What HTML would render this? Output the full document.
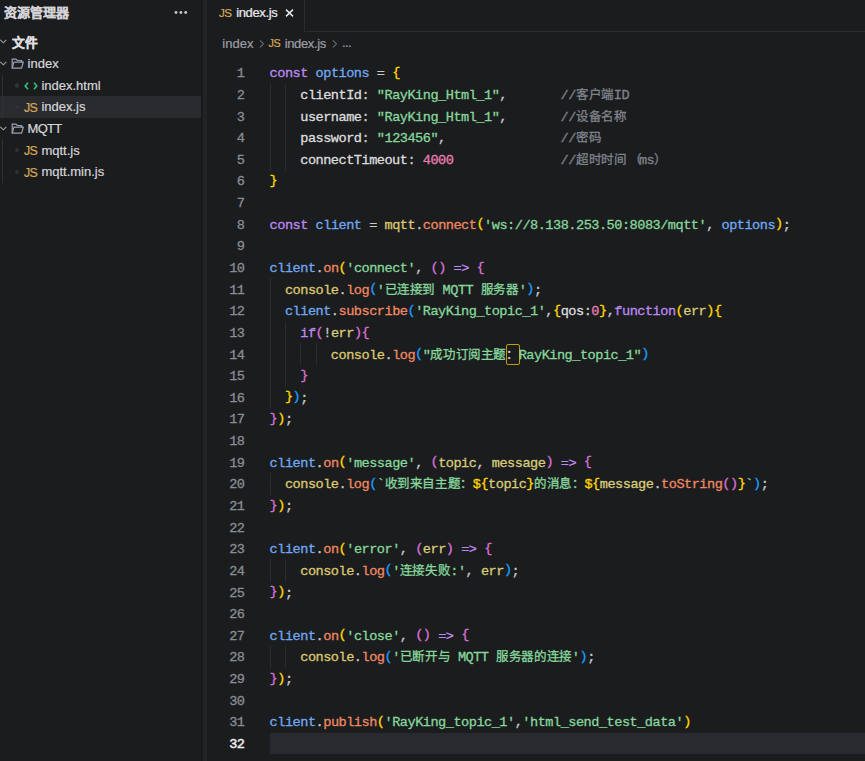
<!DOCTYPE html>
<html lang="zh-CN"><head><meta charset="utf-8"><title>index.js</title>
<style>
*{margin:0;padding:0;box-sizing:border-box}
html,body{width:865px;height:761px;overflow:hidden;background:#1b1c1e}
body{position:relative;font-family:"Liberation Sans",sans-serif;color:#d4d4d4}
.abs{position:absolute}
#side div,#tabs div{-webkit-text-stroke:0.2px currentColor}
#side{position:absolute;left:0;top:0;width:201px;height:761px;background:#1b1c1e}
#sash{position:absolute;left:203px;top:0;width:4px;height:761px;background:#222327}
.row{position:absolute;left:0;width:201px;height:21.8px;line-height:21.8px;font-size:13px;color:#d0d0d4;white-space:nowrap}
.sel{background:#2a2b2f}
.ln{position:absolute;left:207px;width:37.5px;text-align:right;height:21.635px;line-height:21.635px;font-family:"Liberation Mono",monospace;font-size:13.6px;letter-spacing:-0.501px;color:#8a8d93}
.ln.cur{color:#f0f0f2;-webkit-text-stroke:0.45px currentColor}
.cl{position:absolute;left:269.6px;height:21.635px;line-height:21.635px;font-family:"Liberation Mono",monospace;font-size:13.6px;letter-spacing:-0.501px;white-space:pre}
.cl span{white-space:pre}
.lp{font-style:normal;position:relative;left:3px}
.br{font-weight:normal;position:relative;top:-1.4px}
.cl,.ln{-webkit-text-stroke:0.3px currentColor}
i.cj{font-style:normal;font-size:12.5px;letter-spacing:-0.4px}
.gd{position:absolute;width:1px;height:22.135px;background:#2b2c30}
.box{}
#ubox{position:absolute;left:506.2px;top:343.5px;width:13.8px;height:21.1px;border:1.5px solid #c29b00;border-radius:2px}
#curline{position:absolute;left:269.7px;top:732.8px;width:596px;height:21px;background:#282a30}
</style></head>
<body>

<div id="side">
  <div class="abs" style="left:4px;top:4px;font-size:13px;font-weight:bold;color:#d4d4d8;line-height:17px">资源管理器</div>
  <svg class="abs" style="left:170px;top:8px" width="20" height="9" viewBox="0 0 20 9"><circle cx="6" cy="4.5" r="1.45" fill="#c4c4cc"/><circle cx="10.9" cy="4.5" r="1.45" fill="#c4c4cc"/><circle cx="15.7" cy="4.5" r="1.45" fill="#c4c4cc"/></svg>
  <div class="abs sel" style="left:0;top:96px;width:201px;height:21.8px"></div><div class="abs" style="left:11.8px;top:35.00px;font-size:12.8px;font-weight:bold;color:#e0e0e4;line-height:16px">文件</div><svg class="abs" style="left:0;top:39.40px" width="8" height="6" viewBox="0 0 8 6"><path d="M0.3 0.8 L3.3 3.8 L6.3 0.8" fill="none" stroke="#a0a3aa" stroke-width="1.1"/></svg><svg class="abs" style="left:0;top:60.83px" width="8" height="6" viewBox="0 0 8 6"><path d="M0.3 0.8 L3.3 3.8 L6.3 0.8" fill="none" stroke="#a0a3aa" stroke-width="1.1"/></svg><svg class="abs" style="left:10.5px;top:57.83px" width="14" height="12" viewBox="0 0 14 12"><path d="M1.2 10.2 V1.1 H5 L6.3 2.5 H10.6 V4.2" fill="none" stroke="#9ba1b0" stroke-width="1.2"/><path d="M1.2 10.2 L2.9 4.2 H12.3 L10.6 10.2 Z" fill="none" stroke="#9ba1b0" stroke-width="1.2" stroke-linejoin="round"/></svg><div class="abs" style="left:27.6px;top:56.03px;font-size:13px;color:#d6d6da;line-height:16px;letter-spacing:0px">index</div><svg class="abs" style="left:0;top:125.72px" width="8" height="6" viewBox="0 0 8 6"><path d="M0.3 0.8 L3.3 3.8 L6.3 0.8" fill="none" stroke="#a0a3aa" stroke-width="1.1"/></svg><svg class="abs" style="left:10.5px;top:122.72px" width="14" height="12" viewBox="0 0 14 12"><path d="M1.2 10.2 V1.1 H5 L6.3 2.5 H10.6 V4.2" fill="none" stroke="#9ba1b0" stroke-width="1.2"/><path d="M1.2 10.2 L2.9 4.2 H12.3 L10.6 10.2 Z" fill="none" stroke="#9ba1b0" stroke-width="1.2" stroke-linejoin="round"/></svg><div class="abs" style="left:27.6px;top:120.92px;font-size:13px;color:#d6d6da;line-height:16px;letter-spacing:-0.75px">MQTT</div><div class="abs" style="left:2.2px;top:75px;width:1px;height:43px;background:#303136"></div><div class="abs" style="left:2.2px;top:139px;width:1px;height:44px;background:#303136"></div><div class="abs" style="left:14.6px;top:83.36px;width:4.2px;height:4.2px;border-radius:50%;background:#303236"></div><svg class="abs" style="left:24px;top:81.06px" width="14" height="10" viewBox="0 0 14 10"><path d="M4 1.7 L1.2 5 L4 8.3 M10 1.7 L12.8 5 L10 8.3" fill="none" stroke="#2fc47e" stroke-width="1.6"/></svg><div class="abs" style="left:41.4px;top:77.66px;font-size:13px;color:#d6d6da;line-height:16px">index.html</div><div class="abs" style="left:14.6px;top:104.99px;width:4.2px;height:4.2px;border-radius:50%;background:#303236"></div><div class="abs" style="left:24px;top:100.69px;font-size:12.4px;line-height:14px;color:#d6a957;letter-spacing:-0.6px">JS</div><div class="abs" style="left:41.4px;top:99.29px;font-size:13px;color:#d6d6da;line-height:16px">index.js</div><div class="abs" style="left:14.6px;top:148.25px;width:4.2px;height:4.2px;border-radius:50%;background:#303236"></div><div class="abs" style="left:24px;top:143.95px;font-size:12.4px;line-height:14px;color:#d6a957;letter-spacing:-0.6px">JS</div><div class="abs" style="left:41.4px;top:142.55px;font-size:13px;color:#d6d6da;line-height:16px">mqtt.js</div><div class="abs" style="left:14.6px;top:169.88px;width:4.2px;height:4.2px;border-radius:50%;background:#303236"></div><div class="abs" style="left:24px;top:165.58px;font-size:12.4px;line-height:14px;color:#d6a957;letter-spacing:-0.6px">JS</div><div class="abs" style="left:41.4px;top:164.18px;font-size:13px;color:#d6d6da;line-height:16px">mqtt.min.js</div>
</div>
<div id="sash"></div>
<div class="abs" style="left:201px;top:0;width:2px;height:761px;background:#19191b"></div>

<div id="tabs">
<div class="abs" style="left:304px;top:31px;width:561px;height:1px;background:#2a2c30"></div>
<div class="abs" style="left:304px;top:0;width:1px;height:32px;background:#2a2c30"></div>
<div class="abs" style="left:219px;top:6px;font-size:11.6px;line-height:14px;color:#d6a957;letter-spacing:-0.6px">JS</div>
<div class="abs" style="left:236.2px;top:5px;font-size:13px;line-height:16px;color:#ececee;letter-spacing:-0.35px">index.js</div>
<svg class="abs" style="left:285px;top:9px" width="9" height="8" viewBox="0 0 9 8"><path d="M1 0.6 L8 7.4 M8 0.6 L1 7.4" stroke="#e6e6e8" stroke-width="1.5"/></svg>
<div class="abs" style="left:222.3px;top:35.5px;font-size:13px;line-height:16px;color:#9c9ea5">index</div>
<svg class="abs" style="left:258.5px;top:38.5px" width="6" height="10" viewBox="0 0 6 10"><path d="M0.8 1.3 L4.6 4.9 L0.8 8.5" fill="none" stroke="#8c8f96" stroke-width="1"/></svg>
<div class="abs" style="left:268.6px;top:36px;font-size:10.8px;line-height:14px;color:#d6a957;letter-spacing:-0.6px">JS</div>
<div class="abs" style="left:284.7px;top:35.5px;font-size:13px;line-height:16px;color:#9c9ea5;letter-spacing:-0.35px">index.js</div>
<svg class="abs" style="left:331.5px;top:38.5px" width="6" height="10" viewBox="0 0 6 10"><path d="M0.8 1.3 L4.6 4.9 L0.8 8.5" fill="none" stroke="#8c8f96" stroke-width="1"/></svg>
<div class="abs" style="left:342px;top:35px;font-size:13px;line-height:16px;color:#9c9ea5;letter-spacing:-0.6px">...</div>
</div>
<div id="curline"></div>
<div id="ubox"></div>
<div class="ln" style="top:63.28px">1</div>
<div class="cl" style="top:63.28px"><span style="color:#bd8af2">const</span><span style="color:#c9c9c9"> </span><span style="color:#6fa8f0">options</span><span style="color:#c9c9c9"> = </span><span style="color:#ffd700"><b class="br">{</b></span></div>
<div class="ln" style="top:84.92px">2</div>
<div class="gd" style="top:83.52px;left:269.60px"></div>
<div class="gd" style="top:83.52px;left:284.92px"></div>
<div class="cl" style="top:84.92px"><span style="color:#dedede">    clientId</span><span style="color:#c9c9c9">: </span><span style="color:#86d79c">&quot;RayKing_Html_1&quot;</span><span style="color:#c9c9c9">,       </span><span style="color:#7f838a">//<i class="cj">客户端</i>ID</span></div>
<div class="ln" style="top:106.55px">3</div>
<div class="gd" style="top:105.15px;left:269.60px"></div>
<div class="gd" style="top:105.15px;left:284.92px"></div>
<div class="cl" style="top:106.55px"><span style="color:#dedede">    username</span><span style="color:#c9c9c9">: </span><span style="color:#86d79c">&quot;RayKing_Html_1&quot;</span><span style="color:#c9c9c9">,       </span><span style="color:#7f838a">//<i class="cj">设备名称</i></span></div>
<div class="ln" style="top:128.19px">4</div>
<div class="gd" style="top:126.79px;left:269.60px"></div>
<div class="gd" style="top:126.79px;left:284.92px"></div>
<div class="cl" style="top:128.19px"><span style="color:#dedede">    password</span><span style="color:#c9c9c9">: </span><span style="color:#86d79c">&quot;123456&quot;</span><span style="color:#c9c9c9">,               </span><span style="color:#7f838a">//<i class="cj">密码</i></span></div>
<div class="ln" style="top:149.82px">5</div>
<div class="gd" style="top:148.42px;left:269.60px"></div>
<div class="gd" style="top:148.42px;left:284.92px"></div>
<div class="cl" style="top:149.82px"><span style="color:#dedede">    connectTimeout</span><span style="color:#c9c9c9">: </span><span style="color:#e97fb2">4000</span><span style="color:#c9c9c9">              </span><span style="color:#7f838a">//<i class="cj">超时时间<i class="lp">（</i></i>ms<i class="cj">）</i></span></div>
<div class="ln" style="top:171.46px">6</div>
<div class="cl" style="top:171.46px"><span style="color:#ffd700"><b class="br">}</b></span></div>
<div class="ln" style="top:193.09px">7</div>
<div class="ln" style="top:214.73px">8</div>
<div class="cl" style="top:214.73px"><span style="color:#bd8af2">const</span><span style="color:#c9c9c9"> </span><span style="color:#6fa8f0">client</span><span style="color:#c9c9c9"> = </span><span style="color:#dcc870">mqtt</span><span style="color:#c9c9c9">.</span><span style="color:#ee8862">connect</span><span style="color:#ffd700"><b class="br">(</b></span><span style="color:#86d79c">&#x27;ws://8.138.253.50:8083/mqtt&#x27;</span><span style="color:#c9c9c9">, </span><span style="color:#6fa8f0">options</span><span style="color:#ffd700"><b class="br">)</b></span><span style="color:#c9c9c9">;</span></div>
<div class="ln" style="top:236.36px">9</div>
<div class="ln" style="top:258.00px">10</div>
<div class="cl" style="top:258.00px"><span style="color:#6fa8f0">client</span><span style="color:#c9c9c9">.</span><span style="color:#ee8862">on</span><span style="color:#ffd700"><b class="br">(</b></span><span style="color:#86d79c">&#x27;connect&#x27;</span><span style="color:#c9c9c9">, </span><span style="color:#da70d6"><b class="br">(</b><b class="br">)</b></span><span style="color:#c9c9c9"> </span><span style="color:#bd8af2">=&gt;</span><span style="color:#c9c9c9"> </span><span style="color:#da70d6"><b class="br">{</b></span></div>
<div class="ln" style="top:279.63px">11</div>
<div class="gd" style="top:278.23px;left:269.60px"></div>
<div class="cl" style="top:279.63px"><span style="color:#dcc870">  console</span><span style="color:#c9c9c9">.</span><span style="color:#ee8862">log</span><span style="color:#179fff"><b class="br">(</b></span><span style="color:#86d79c">&#x27;<i class="cj">已连接到</i> MQTT <i class="cj">服务器</i>&#x27;</span><span style="color:#179fff"><b class="br">)</b></span><span style="color:#c9c9c9">;</span></div>
<div class="ln" style="top:301.27px">12</div>
<div class="gd" style="top:299.87px;left:269.60px"></div>
<div class="cl" style="top:301.27px"><span style="color:#6fa8f0">  client</span><span style="color:#c9c9c9">.</span><span style="color:#ee8862">subscribe</span><span style="color:#179fff"><b class="br">(</b></span><span style="color:#86d79c">&#x27;RayKing_topic_1&#x27;</span><span style="color:#c9c9c9">,</span><span style="color:#ffd700"><b class="br">{</b></span><span style="color:#dedede">qos</span><span style="color:#c9c9c9">:</span><span style="color:#e97fb2">0</span><span style="color:#ffd700"><b class="br">}</b></span><span style="color:#c9c9c9">,</span><span style="color:#bd8af2">function</span><span style="color:#ffd700"><b class="br">(</b></span><span style="color:#d8cc7a">err</span><span style="color:#ffd700"><b class="br">)</b></span><span style="color:#ffd700"><b class="br">{</b></span></div>
<div class="ln" style="top:322.90px">13</div>
<div class="gd" style="top:321.50px;left:269.60px"></div>
<div class="gd" style="top:321.50px;left:284.92px"></div>
<div class="cl" style="top:322.90px"><span style="color:#bd8af2">    if</span><span style="color:#da70d6"><b class="br">(</b></span><span style="color:#c9c9c9">!</span><span style="color:#d8cc7a">err</span><span style="color:#da70d6"><b class="br">)</b></span><span style="color:#da70d6"><b class="br">{</b></span></div>
<div class="ln" style="top:344.54px">14</div>
<div class="gd" style="top:343.14px;left:269.60px"></div>
<div class="gd" style="top:343.14px;left:284.92px"></div>
<div class="gd" style="top:343.14px;left:300.24px"></div>
<div class="gd" style="top:343.14px;left:315.56px"></div>
<div class="cl" style="top:344.54px"><span style="color:#dcc870">        console</span><span style="color:#c9c9c9">.</span><span style="color:#ee8862">log</span><span style="color:#179fff"><b class="br">(</b></span><span style="color:#86d79c">&quot;<i class="cj">成功订阅主题</i></span><span class="box"><i class="cj">：</i></span><span style="color:#86d79c">RayKing_topic_1&quot;</span><span style="color:#179fff"><b class="br">)</b></span></div>
<div class="ln" style="top:366.17px">15</div>
<div class="gd" style="top:364.77px;left:269.60px"></div>
<div class="gd" style="top:364.77px;left:284.92px"></div>
<div class="cl" style="top:366.17px"><span style="color:#da70d6">    <b class="br">}</b></span></div>
<div class="ln" style="top:387.81px">16</div>
<div class="gd" style="top:386.41px;left:269.60px"></div>
<div class="cl" style="top:387.81px"><span style="color:#ffd700">  <b class="br">}</b></span><span style="color:#179fff"><b class="br">)</b></span><span style="color:#c9c9c9">;</span></div>
<div class="ln" style="top:409.44px">17</div>
<div class="cl" style="top:409.44px"><span style="color:#da70d6"><b class="br">}</b></span><span style="color:#ffd700"><b class="br">)</b></span><span style="color:#c9c9c9">;</span></div>
<div class="ln" style="top:431.08px">18</div>
<div class="ln" style="top:452.71px">19</div>
<div class="cl" style="top:452.71px"><span style="color:#6fa8f0">client</span><span style="color:#c9c9c9">.</span><span style="color:#ee8862">on</span><span style="color:#ffd700"><b class="br">(</b></span><span style="color:#86d79c">&#x27;message&#x27;</span><span style="color:#c9c9c9">, </span><span style="color:#da70d6"><b class="br">(</b></span><span style="color:#d8cc7a">topic</span><span style="color:#c9c9c9">, </span><span style="color:#d8cc7a">message</span><span style="color:#da70d6"><b class="br">)</b></span><span style="color:#c9c9c9"> </span><span style="color:#bd8af2">=&gt;</span><span style="color:#c9c9c9"> </span><span style="color:#da70d6"><b class="br">{</b></span></div>
<div class="ln" style="top:474.35px">20</div>
<div class="gd" style="top:472.95px;left:269.60px"></div>
<div class="cl" style="top:474.35px"><span style="color:#dcc870">  console</span><span style="color:#c9c9c9">.</span><span style="color:#ee8862">log</span><span style="color:#179fff"><b class="br">(</b></span><span style="color:#86d79c">`<i class="cj">收到来自主题：</i></span><span style="color:#ffd700">$<b class="br">{</b></span><span style="color:#d8cc7a">topic</span><span style="color:#ffd700"><b class="br">}</b></span><span style="color:#86d79c"><i class="cj">的消息：</i></span><span style="color:#ffd700">$<b class="br">{</b></span><span style="color:#d8cc7a">message</span><span style="color:#c9c9c9">.</span><span style="color:#ee8862">toString</span><span style="color:#da70d6"><b class="br">(</b><b class="br">)</b></span><span style="color:#ffd700"><b class="br">}</b></span><span style="color:#86d79c">`</span><span style="color:#179fff"><b class="br">)</b></span><span style="color:#c9c9c9">;</span></div>
<div class="ln" style="top:495.98px">21</div>
<div class="cl" style="top:495.98px"><span style="color:#da70d6"><b class="br">}</b></span><span style="color:#ffd700"><b class="br">)</b></span><span style="color:#c9c9c9">;</span></div>
<div class="ln" style="top:517.62px">22</div>
<div class="ln" style="top:539.25px">23</div>
<div class="cl" style="top:539.25px"><span style="color:#6fa8f0">client</span><span style="color:#c9c9c9">.</span><span style="color:#ee8862">on</span><span style="color:#ffd700"><b class="br">(</b></span><span style="color:#86d79c">&#x27;error&#x27;</span><span style="color:#c9c9c9">, </span><span style="color:#da70d6"><b class="br">(</b></span><span style="color:#d8cc7a">err</span><span style="color:#da70d6"><b class="br">)</b></span><span style="color:#c9c9c9"> </span><span style="color:#bd8af2">=&gt;</span><span style="color:#c9c9c9"> </span><span style="color:#da70d6"><b class="br">{</b></span></div>
<div class="ln" style="top:560.89px">24</div>
<div class="gd" style="top:559.49px;left:269.60px"></div>
<div class="gd" style="top:559.49px;left:284.92px"></div>
<div class="cl" style="top:560.89px"><span style="color:#dcc870">    console</span><span style="color:#c9c9c9">.</span><span style="color:#ee8862">log</span><span style="color:#179fff"><b class="br">(</b></span><span style="color:#86d79c">&#x27;<i class="cj">连接失败</i>:&#x27;</span><span style="color:#c9c9c9">, </span><span style="color:#d8cc7a">err</span><span style="color:#179fff"><b class="br">)</b></span><span style="color:#c9c9c9">;</span></div>
<div class="ln" style="top:582.52px">25</div>
<div class="cl" style="top:582.52px"><span style="color:#da70d6"><b class="br">}</b></span><span style="color:#ffd700"><b class="br">)</b></span><span style="color:#c9c9c9">;</span></div>
<div class="ln" style="top:604.16px">26</div>
<div class="ln" style="top:625.79px">27</div>
<div class="cl" style="top:625.79px"><span style="color:#6fa8f0">client</span><span style="color:#c9c9c9">.</span><span style="color:#ee8862">on</span><span style="color:#ffd700"><b class="br">(</b></span><span style="color:#86d79c">&#x27;close&#x27;</span><span style="color:#c9c9c9">, </span><span style="color:#da70d6"><b class="br">(</b><b class="br">)</b></span><span style="color:#c9c9c9"> </span><span style="color:#bd8af2">=&gt;</span><span style="color:#c9c9c9"> </span><span style="color:#da70d6"><b class="br">{</b></span></div>
<div class="ln" style="top:647.43px">28</div>
<div class="gd" style="top:646.03px;left:269.60px"></div>
<div class="gd" style="top:646.03px;left:284.92px"></div>
<div class="cl" style="top:647.43px"><span style="color:#dcc870">    console</span><span style="color:#c9c9c9">.</span><span style="color:#ee8862">log</span><span style="color:#179fff"><b class="br">(</b></span><span style="color:#86d79c">&#x27;<i class="cj">已断开与</i> MQTT <i class="cj">服务器的连接</i>&#x27;</span><span style="color:#179fff"><b class="br">)</b></span><span style="color:#c9c9c9">;</span></div>
<div class="ln" style="top:669.06px">29</div>
<div class="cl" style="top:669.06px"><span style="color:#da70d6"><b class="br">}</b></span><span style="color:#ffd700"><b class="br">)</b></span><span style="color:#c9c9c9">;</span></div>
<div class="ln" style="top:690.70px">30</div>
<div class="ln" style="top:712.33px">31</div>
<div class="cl" style="top:712.33px"><span style="color:#6fa8f0">client</span><span style="color:#c9c9c9">.</span><span style="color:#ee8862">publish</span><span style="color:#ffd700"><b class="br">(</b></span><span style="color:#86d79c">&#x27;RayKing_topic_1&#x27;</span><span style="color:#c9c9c9">,</span><span style="color:#86d79c">&#x27;html_send_test_data&#x27;</span><span style="color:#ffd700"><b class="br">)</b></span></div>
<div class="ln cur" style="top:733.97px">32</div>

</body></html>
